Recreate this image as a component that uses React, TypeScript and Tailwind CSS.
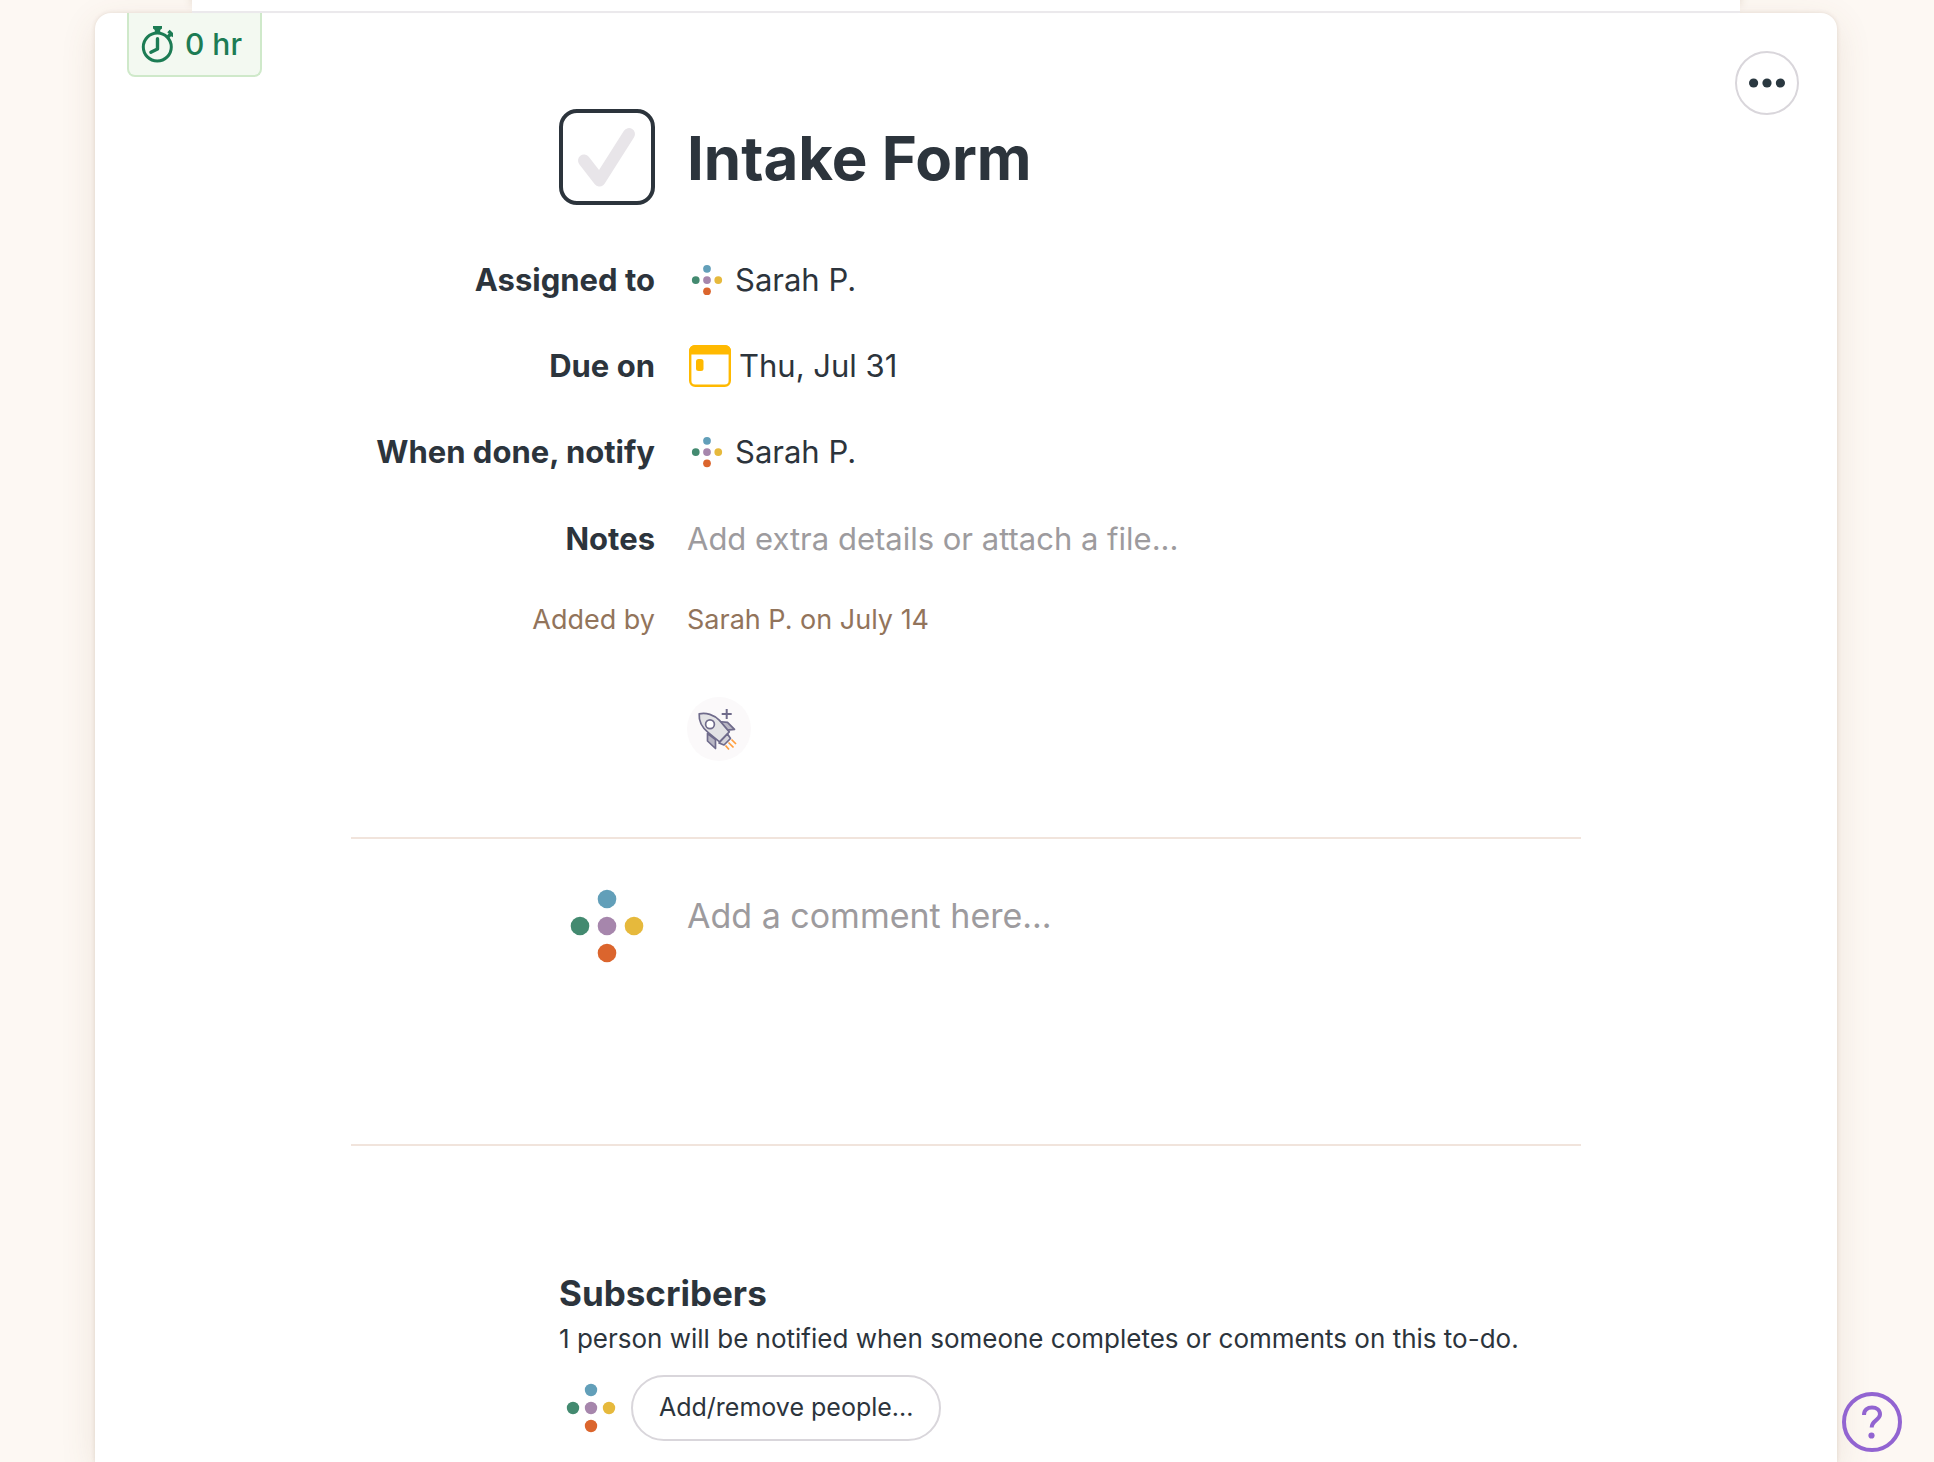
import { useState, type ReactNode } from "react";

const Avatar = ({ className }: { className: string }) => (
  <svg viewBox="0 0 96 96" className={className} role="img" aria-label="Sarah P.">
    <circle cx="48" cy="21" r="9.3" fill="#629fb9" />
    <circle cx="21" cy="48" r="9.3" fill="#438a70" />
    <circle cx="48" cy="48" r="9.3" fill="#a686ac" />
    <circle cx="75" cy="48" r="9.3" fill="#e6b93c" />
    <circle cx="48" cy="75" r="9.3" fill="#db652d" />
  </svg>
);

const StopwatchIcon = () => (
  <svg viewBox="0 0 32 37" className="h-[37px] w-8" fill="none" stroke="#1c7c54">
    <path d="M12 0h9v2.5l-1.8 1.5v3.5h-5.4V4L12 2.5z" fill="#1c7c54" stroke="none" />
    <circle cx="16.3" cy="21" r="14" strokeWidth="3" />
    <path d="M27.5 5l5 5M29.8 8l-3 3" strokeWidth="3.4" />
    <path d="M16.5 12.8v10.2l-6.6 3.2" strokeWidth="3.4" strokeLinecap="round" strokeLinejoin="round" />
  </svg>
);

const CalendarIcon = () => (
  <svg viewBox="0 0 42 42" className="ml-0.5 size-[42px]">
    <rect x="1.2" y="1.2" width="39.6" height="39.6" rx="5" fill="#fff" stroke="#ffb900" strokeWidth="2.4" />
    <path d="M0 9.5V6a6 6 0 0 1 6-6h30a6 6 0 0 1 6 6v3.5z" fill="#ffb900" />
    <rect x="7" y="14" width="7.5" height="12" rx="2.5" fill="#ffb900" />
  </svg>
);

const RocketIcon = () => (
  <svg viewBox="0 0 64 64" className="size-16" fill="none" strokeLinejoin="round">
    <g stroke="#6f6b8b" strokeWidth="1.7">
      <path d="M31.5 24.5l9 .8 7 7-9.5 1zM20.5 36.5v7.5l8 7.5v-9z" fill="#b9b7c4" />
      <path d="M12.2 16.9c6.5-1.8 15 .8 20.3 6.5l9.8 11.5-9.8 10-11.2-9.3c-6.3-5-9.6-12-9.1-18.7z" fill="#e3e3e5" />
      <path d="M40.5 37l3 4.5-6.5 6.5-5-2z" fill="#d6d5db" />
      <circle cx="23" cy="27.3" r="4.4" fill="#fff" />
      <path d="M39.7 12v10M34.7 17h10" strokeWidth="2" />
    </g>
    <path d="M44.5 42.5l4.5 4.5M41.5 45.5l5 5M38.5 48.5l3.5 4" stroke="#ff9e3d" strokeWidth="1.7" />
  </svg>
);

const Row = ({ label, children }: { label: string; children: ReactNode }) => (
  <div className="flex h-[86px] items-center gap-8">
    <dt className="w-76 shrink-0 text-right font-bold">{label}</dt>
    <dd className="flex items-center gap-2">{children}</dd>
  </div>
);

const App = () => {
  const [done, setDone] = useState(false);
  const [notes, setNotes] = useState("");
  const [comment, setComment] = useState("");

  return (
    <div className="flex min-h-screen flex-col bg-[#fdf8f3] pr-[97px] pl-[95px] font-['Inter',sans-serif] text-[#2c343c]">
      {/* Parent sheet peeking out above the card */}
      <div className="relative z-10 mx-[97px] h-[13px] border-b-2 border-[#ebe9ec] bg-white shadow-[0_-8px_10px_rgba(120,80,50,0.2)]" />

      <main className="flex-1 rounded-t-2xl bg-white shadow-[0_0_4px_rgba(120,80,50,0.16),0_10px_36px_rgba(120,80,50,0.12)]">
        <div className="flex h-24 items-start justify-between pr-[38px] pl-8">
          <button className="flex h-16 items-center gap-3 rounded-b-lg border-2 border-t-0 border-[#cfe9ca] bg-[#f3f9f1] pr-[18px] pl-3 text-[30px] font-medium text-[#1c7c54]">
            <StopwatchIcon />
            0 hr
          </button>
          <button
            aria-label="Options"
            className="mt-[38px] flex size-16 items-center justify-center rounded-full border-2 border-[#d9d6db]"
          >
            <svg viewBox="0 0 36 10" className="h-[10px] w-9" fill="#2a3840">
              <circle cx="4.6" cy="5" r="4.6" />
              <circle cx="18" cy="5" r="4.6" />
              <circle cx="31.4" cy="5" r="4.6" />
            </svg>
          </button>
        </div>

        <div className="mx-auto max-w-[1230px]">
          <header className="flex items-center gap-8 pl-52">
            <label className="grid size-24 shrink-0">
              <input
                type="checkbox"
                aria-label="Mark Intake Form as done"
                checked={done}
                onChange={(e) => setDone(e.target.checked)}
                className="col-start-1 row-start-1 size-24 appearance-none rounded-[18px] border-4 border-[#2c343c] bg-white"
              />
              <svg
                viewBox="0 0 96 96"
                fill="none"
                className={
                  done
                    ? "pointer-events-none col-start-1 row-start-1 size-24 text-[#1c7c54]"
                    : "pointer-events-none col-start-1 row-start-1 size-24 text-[#e8e5e9]"
                }
              >
                <path d="M25 51.5L40.5 71.5L70 25" stroke="currentColor" strokeWidth="12" strokeLinecap="round" strokeLinejoin="round" />
              </svg>
            </label>
            <h1 className="pt-0.5 text-[60px] leading-[94px] font-bold">Intake Form</h1>
          </header>

          <dl className="mt-8 text-[31px]">
            <Row label="Assigned to">
              <Avatar className="size-10" />
              <span>Sarah P.</span>
            </Row>
            <Row label="Due on">
              <CalendarIcon />
              <span>Thu, Jul 31</span>
            </Row>
            <Row label="When done, notify">
              <Avatar className="size-10" />
              <span>Sarah P.</span>
            </Row>
            <div className="flex h-[88px] items-center gap-8">
              <dt className="w-76 shrink-0 text-right font-bold">
                <label htmlFor="notes">Notes</label>
              </dt>
              <dd className="flex-1">
                <input
                  id="notes"
                  value={notes}
                  onChange={(e) => setNotes(e.target.value)}
                  placeholder="Add extra details or attach a file..."
                  className="w-full placeholder-[#9d9b9e] outline-none"
                />
              </dd>
            </div>
            <div className="flex h-[74px] items-center gap-8 text-[27px] text-[#92745b]">
              <dt className="w-76 shrink-0 text-right">Added by</dt>
              <dd>Sarah P. on July 14</dd>
            </div>
          </dl>

          <div className="mt-10 pl-84">
            <button aria-label="Add a boost" className="block size-16 rounded-full bg-[#fbf9fa]">
              <RocketIcon />
            </button>
          </div>

          <section className="mt-19 flex h-[309px] gap-8 border-y-2 border-[#f1e4dc] pt-[39px] pl-52">
            <Avatar className="size-24 shrink-0" />
            <textarea
              aria-label="Comment"
              value={comment}
              onChange={(e) => setComment(e.target.value)}
              placeholder="Add a comment here..."
              className="h-48 flex-1 resize-none pt-[14px] text-[34px] leading-12 placeholder-[#9d9b9e] outline-none"
            />
          </section>

          <section className="mt-[123px] pb-4 pl-52">
            <h2 className="text-[35px] leading-12 font-bold">Subscribers</h2>
            <p className="mt-1 text-[26px] leading-9">
              1 person will be notified when someone completes or comments on this to-do.
            </p>
            <div className="mt-[18px] flex items-center gap-2">
              <Avatar className="size-16" />
              <button className="h-[66px] rounded-full border-2 border-[#d9d6db] px-[26px] text-[25px]">
                Add/remove people...
              </button>
            </div>
          </section>
        </div>
      </main>

      <button
        aria-label="Help"
        className="fixed right-8 bottom-[10px] flex size-[60px] items-center justify-center rounded-full border-4 border-[#9264d1] text-[#9264d1]"
      >
        <svg viewBox="0 0 24 36" className="h-9 w-6" fill="none">
          <path d="M4 11C4 6 7.5 3.5 12 3.5s8 2.6 8 6.8c0 6-8.3 5.7-8.3 13.2" stroke="currentColor" strokeWidth="4" />
          <circle cx="11.5" cy="31.5" r="3.1" fill="currentColor" />
        </svg>
      </button>
    </div>
  );
};

export default App;
